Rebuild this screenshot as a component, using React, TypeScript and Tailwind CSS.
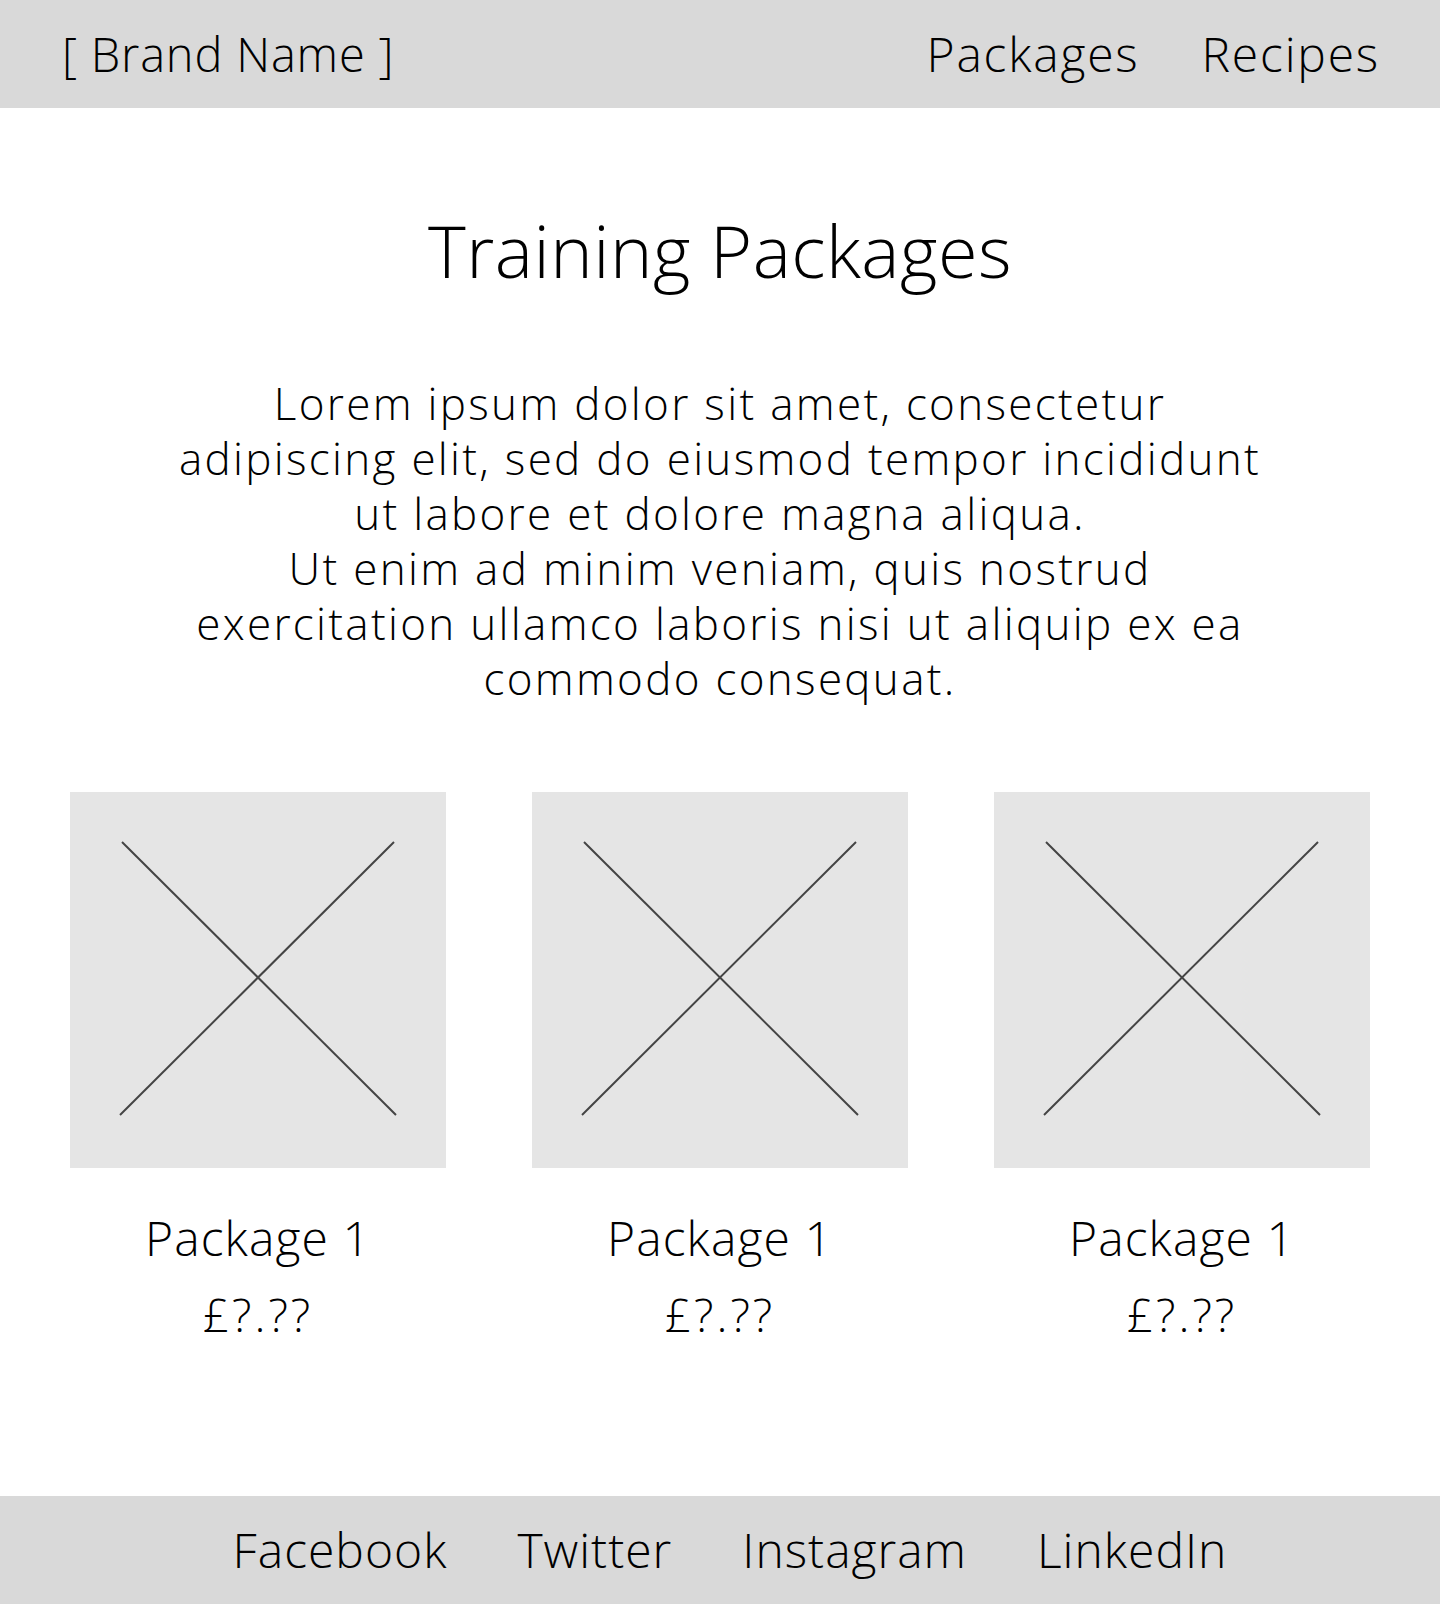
const font = { fontFamily: '"Open Sans", "Lato", sans-serif' }

const packages = [
  { name: "Package 1", price: "£?.??" },
  { name: "Package 1", price: "£?.??" },
  { name: "Package 1", price: "£?.??" },
]

const socials = ["Facebook", "Twitter", "Instagram", "LinkedIn"]

function Placeholder() {
  return (
    <div className="h-[376px] w-[376px] bg-[#e5e5e5]">
      <svg width="376" height="376" viewBox="0 0 376 376" aria-hidden="true">
        <line x1="52" y1="50" x2="326" y2="323" stroke="#444" strokeWidth="2" />
        <line x1="324" y1="50" x2="50" y2="323" stroke="#444" strokeWidth="2" />
      </svg>
    </div>
  )
}

function PackageCard({ name, price }: { name: string; price: string }) {
  return (
    <div className="flex w-[376px] flex-col items-center">
      <Placeholder />
      <div className="mt-[46px] text-[48px] leading-[48px] tracking-[1.1px]">{name}</div>
      <div className="mt-[28px] text-[46px] leading-[48px] tracking-[3px]">{price}</div>
    </div>
  )
}

export default function App() {
  return (
    <div className="flex min-h-[1604px] w-[1440px] flex-col bg-white font-light text-black" style={font}>
      {/* Header */}
      <header className="flex h-[108px] items-center justify-between bg-[#d9d9d9] pl-[62px] pr-[60px]">
        <div className="text-[47px] leading-none tracking-[0.8px]">[ Brand Name ]</div>
        <nav className="flex items-center gap-[62px] text-[48px] leading-none tracking-[1.8px]">
          <a href="#">Packages</a>
          <a href="#">Recipes</a>
        </nav>
      </header>

      {/* Intro */}
      <main className="flex flex-col items-center">
        <h1 className="mt-[106px] text-[72px] font-light leading-[72px] tracking-[0.5px]">Training Packages</h1>
        <p className="mt-[90px] text-center text-[44px] leading-[55px] tracking-[2.3px]">
          Lorem ipsum dolor sit amet, consectetur
          <br />
          adipiscing elit, sed do eiusmod tempor incididunt
          <br />
          ut labore et dolore magna aliqua.
          <br />
          Ut enim ad minim veniam, quis nostrud
          <br />
          exercitation ullamco laboris nisi ut aliquip ex ea
          <br />
          commodo consequat.
        </p>

        <div className="mt-[86px] flex w-full justify-between px-[70px]">
          {packages.map((p, i) => (
            <PackageCard key={i} name={p.name} price={p.price} />
          ))}
        </div>
      </main>

      {/* Footer */}
      <footer className="mt-auto flex h-[108px] items-center justify-center gap-[70px] bg-[#d9d9d9] pl-[20px] text-[48px] leading-none tracking-[1px]">
        {socials.map((s) => (
          <a key={s} href="#">
            {s}
          </a>
        ))}
      </footer>
    </div>
  )
}
